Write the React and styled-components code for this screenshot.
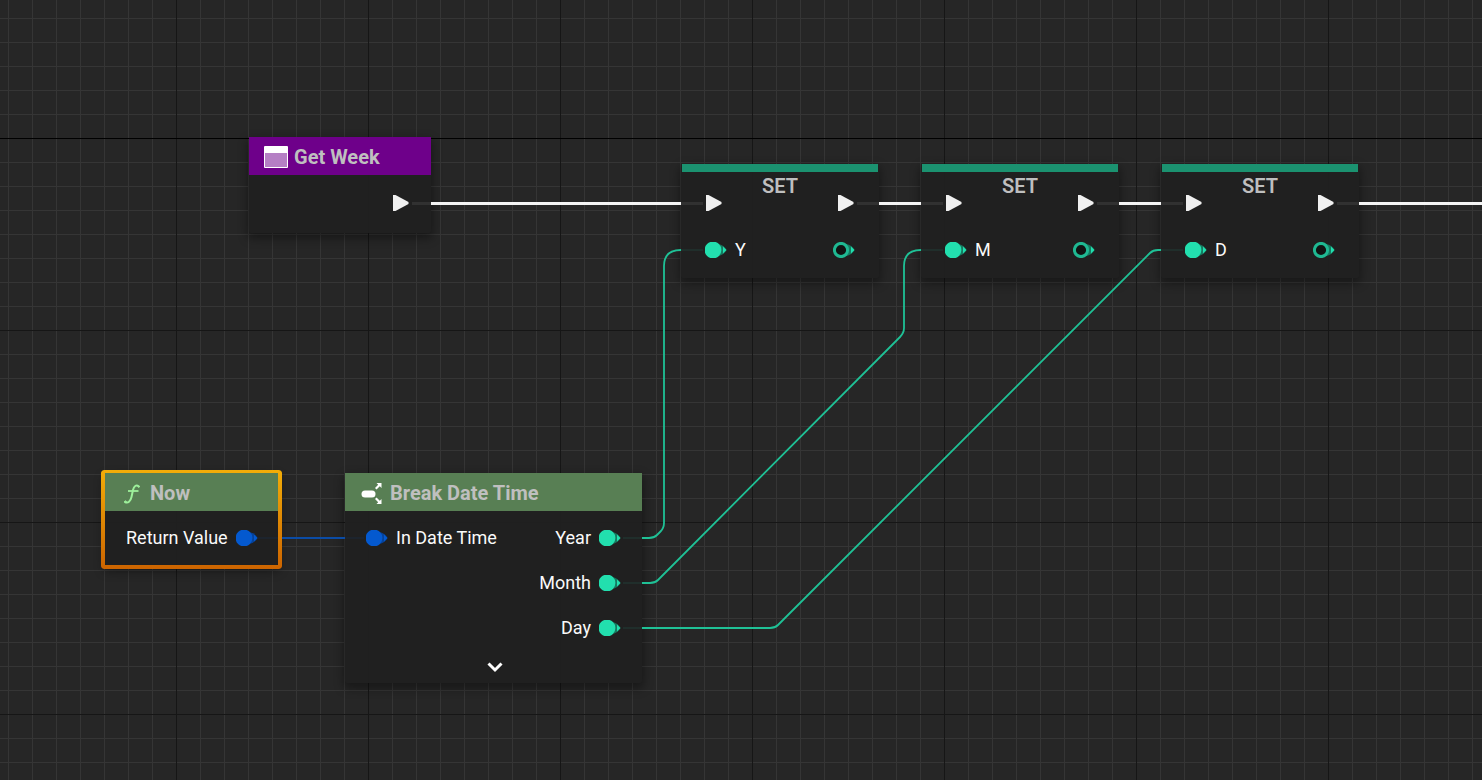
import React from "react";
import styled, { createGlobalStyle } from "styled-components";

const GlobalStyle = createGlobalStyle`
  * {
    box-sizing: border-box;
  }

  body {
    margin: 0;
    background-color: #262626;
    font-family: Roboto, sans-serif;
  }
`;

const Graph = styled.main`
  position: relative;
  width: 100%;
  height: 100vh;
  overflow: hidden;
  background-color: #262626;
  background-image:
    linear-gradient(#000 1px, transparent 1px),
    linear-gradient(90deg, #161616 1px, transparent 1px),
    linear-gradient(#161616 1px, transparent 1px),
    linear-gradient(90deg, #353535 1px, transparent 1px),
    linear-gradient(#353535 1px, transparent 1px);
  background-size:
    100% 1536px,
    192px 192px,
    192px 192px,
    24px 24px,
    24px 24px;
  background-position:
    0 138px,
    176px 138px,
    176px 138px,
    8px 18px,
    8px 18px;
`;

const Wires = styled.svg`
  position: absolute;
  top: 0;
  left: 0;
  width: 100%;
  height: 100%;
  overflow: visible;
  fill: none;
  pointer-events: none;
`;

// nodes sit at free coordinates on the graph
const Node = styled.section`
  position: absolute;
  left: ${({ $x }) => $x}px;
  top: ${({ $y }) => $y}px;
  width: ${({ $w }) => $w}px;
  background-color: rgba(32, 32, 32, 0.95);
  border-radius: 4px;
  box-shadow: 0 4px 10px 2px rgba(0, 0, 0, 0.35);
`;

const SelectedFrame = styled.div`
  position: absolute;
  inset: -3px -4px;
  padding: 3px 4px 4px;
  border-radius: 3px;
  background: linear-gradient(#f2ad08, #cc6400);
  mask:
    linear-gradient(#000 0 0) content-box exclude,
    linear-gradient(#000 0 0);
  pointer-events: none;
`;

const Header = styled.header`
  height: 38px;
  padding: 2px 0 0 15px;
  display: flex;
  align-items: center;
  gap: 6px;
  background-color: ${({ $color }) => $color};
`;

const Title = styled.h2`
  margin: 0;
  font-size: 20px;
  line-height: 24px;
  font-weight: 700;
  color: #bfbfbf;
`;

const Strip = styled.div`
  height: 8px;
  margin: 0 1px;
  background-color: #1b9270;
`;

const SetTitle = styled(Title)`
  height: 19px;
  margin-top: 2px;
  font-weight: 600;
  text-align: center;
`;

const Row = styled.div`
  height: 45px;
  padding: 0 21px;
  display: flex;
  align-items: center;
  justify-content: space-between;
`;

const SetRow = styled(Row)`
  padding: 0 24px;
`;

const ExecRow = styled.div`
  height: 20px;
  padding: 0 ${({ $end }) => ($end ? 22 : 25)}px;
  display: flex;
  align-items: center;
  justify-content: ${({ $end }) => ($end ? "flex-end" : "space-between")};
`;

const Body = styled.div`
  padding: ${({ $pad }) => $pad};
`;

const Port = styled.div`
  margin-left: ${({ $out }) => ($out ? "auto" : "0")};
  display: flex;
  align-items: center;
  gap: 8px;
  font-size: 18px;
  line-height: 24px;
  white-space: nowrap;
  color: #fafafa;

  svg {
    flex-shrink: 0;
  }
`;

const ExpandButton = styled.button`
  width: 100%;
  height: 33px;
  padding: 1px 0 0 2px;
  border: 0;
  background: none;
  display: flex;
  align-items: center;
  justify-content: center;
`;

const ExecPin = () => (
  <svg width="16" height="16" viewBox="0 0 16 16">
    <path d="M0 0h2.500L15.500 7v2L2.500 16H0z" fill="#f0f0f0" />
  </svg>
);

const DataPin = ({ color, dim, empty }) => (
  <svg width="22" height="16" viewBox="0 0 22 16">
    <path d="M13 2Q19 3 21.500 8Q19 13 13 14z" fill={dim} />
    <path d="M18 4.500L21.500 8l-3.500 3.500z" fill={color} />
    {empty ? (
      <circle cx="8" cy="8" r="6.600" fill="#101413" stroke="#1fb892" strokeWidth="3" />
    ) : (
      <circle cx="8" cy="8" r="8.400" fill={color} />
    )}
  </svg>
);

const GreenPin = ({ empty }) => (
  <DataPin color="#22dfae" dim="#167a60" empty={empty} />
);

const BluePin = () => <DataPin color="#0459cf" dim="#06429a" />;

const WindowIcon = () => (
  <svg width="24" height="22" viewBox="0 0 24 22">
    <rect width="24" height="22" rx="1" fill="#fff" />
    <rect x="1" y="7" width="22" height="14" fill="#b57fc4" />
  </svg>
);

const FunctionIcon = () => (
  <svg width="24" height="24" viewBox="0 0 24 24" fill="none" stroke="#9df09b">
    <path
      d="M19 5.500C16 3.500 14 5 13 9L11.500 16C10.500 20.500 8 22.500 5 21"
      strokeWidth="2"
      strokeLinecap="round"
    />
    <path d="M8 10h10.500" strokeWidth="1.800" />
    <circle cx="5.500" cy="20.600" r="0.800" />
    <circle cx="18.500" cy="5.700" r="0.600" />
  </svg>
);

const BreakIcon = () => (
  <svg width="24" height="24" viewBox="0 0 24 24" fill="#fff">
    <rect x="1.500" y="9.500" width="14" height="7" rx="3.500" />
    <path d="M16.500 2h5v5l-1.700-1.700-3.300 3.300-1.500-1.500 3.200-3.400z" />
    <path d="M21.500 23h-5l1.700-1.700-3.200-3.300 1.500-1.500 3.300 3.200 1.700-1.700z" />
  </svg>
);

const EXEC_WIRES = [
  "M431 203.500H681",
  "M879 203.500H921",
  "M1119 203.500H1161",
  "M1359 203.500H4000",
];

const INT_WIRES = [
  "M642 538H649Q654 538 657 535L660.500 531.500Q664 528 664 523V266Q664 250 681 250",
  "M642 583H650Q655 583 658 580L900 337Q904 333 904 328V266Q904 250 921 250",
  "M642 628H770Q775 628 778 625L1150 253Q1153 250 1158 250H1161",
];

// faint ends of the wires where they run over a node
const STUBS = [
  {
    d: "M412 203.500H431M681 203.500H703M857 203.500H879M921 203.500H943M1097 203.500H1119M1161 203.500H1183M1337 203.500H1359",
    color: "#fff",
    width: 3,
  },
  {
    d: "M681 250H703M921 250H943M1161 250H1183M623 538H642M623 583H642M623 628H642",
    color: "#22dfae",
    width: 2,
  },
  { d: "M258 538H278M345 538H364", color: "#0459cf", width: 2 },
];

const SetNode = ({ x, name }) => (
  <Node $x={x} $y={164} $w={198}>
    <Strip />
    <SetTitle>SET</SetTitle>
    <ExecRow>
      <ExecPin />
      <ExecPin />
    </ExecRow>
    <Body $pad="14px 0 6px">
      <SetRow>
        <Port>
          <GreenPin />
          {name}
        </Port>
        <GreenPin empty />
      </SetRow>
    </Body>
  </Node>
);

const OutputRow = ({ label }) => (
  <Row>
    <Port $out>
      {label}
      <GreenPin />
    </Port>
  </Row>
);

const App = () => {
  return (
    <>
      <GlobalStyle />
      <Graph>
        <Node $x={249} $y={137} $w={182}>
          <Header $color="#6e008a">
            <WindowIcon />
            <Title>Get Week</Title>
          </Header>
          <Body $pad="18px 0 20px">
            <ExecRow $end>
              <ExecPin />
            </ExecRow>
          </Body>
        </Node>

        <SetNode x={681} name="Y" />
        <SetNode x={921} name="M" />
        <SetNode x={1161} name="D" />

        <Node $x={105} $y={473} $w={173}>
          <Header $color="#587f54">
            <FunctionIcon />
            <Title>Now</Title>
          </Header>
          <Body $pad="4px 0 6px">
            <Row>
              <Port>
                Return Value
                <BluePin />
              </Port>
            </Row>
          </Body>
          <SelectedFrame />
        </Node>

        <Node $x={345} $y={473} $w={297}>
          <Header $color="#587f54">
            <BreakIcon />
            <Title>Break Date Time</Title>
          </Header>
          <Body $pad="4px 0 0">
            <Row>
              <Port>
                <BluePin />
                In Date Time
              </Port>
              <Port $out>
                Year
                <GreenPin />
              </Port>
            </Row>
            <OutputRow label="Month" />
            <OutputRow label="Day" />
            <ExpandButton aria-label="Expand">
              <svg width="16" height="12" viewBox="0 0 16 12" fill="none">
                <path d="M1.500 2.500L8 9 14.500 2.500" stroke="#fff" strokeWidth="3" />
              </svg>
            </ExpandButton>
          </Body>
        </Node>

        <Wires>
          {EXEC_WIRES.map((d) => (
            <path key={d} d={d} stroke="#f4f4f4" strokeWidth="2.800" />
          ))}
          {INT_WIRES.map((d) => (
            <path key={d} d={d} stroke="#1fc196" strokeWidth="1.800" />
          ))}
          <path d="M282 538H345" stroke="#0b4ca6" strokeWidth="2" />
          {STUBS.map(({ d, color, width }) => (
            <path key={d} d={d} stroke={color} strokeWidth={width} opacity="0.080" />
          ))}
        </Wires>
      </Graph>
    </>
  );
};

export default App;
